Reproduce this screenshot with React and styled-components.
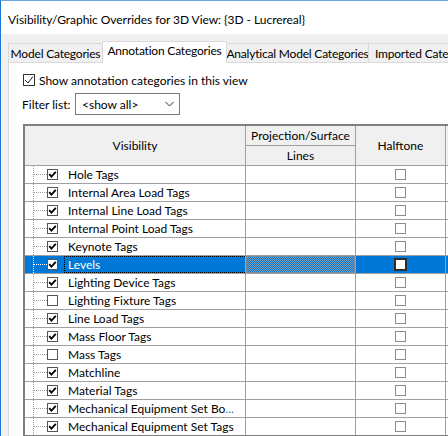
import React from 'react';
import styled, { createGlobalStyle, css } from 'styled-components';

const Global = createGlobalStyle`
  html, body { margin: 0; padding: 0; background: #fff; }
  body { font-family: Lato, "Noto Sans", sans-serif; font-size: 12px; color: #000; }
`;

const Window = styled.div`
  width: 448px;
  height: 436px;
  box-sizing: border-box;
  overflow: hidden;
  border-left: 1px solid #1a7ad4;
  border-top: 1px solid #6aa6e2;
  background: #f0f0f0;
  display: flex;
  flex-direction: column;
`;

const TitleBar = styled.div`
  height: 33px;
  flex: none;
  box-sizing: border-box;
  background: #fff;
  display: flex;
  align-items: center;
  padding: 3px 0 0 7px;
  font-size: 12px;
  letter-spacing: -0.05px;
  white-space: nowrap;
`;

const Body = styled.div`
  flex: 1;
  min-height: 0;
  display: flex;
  flex-direction: column;
  padding: 7px 0 0 7px;
`;

const TabStrip = styled.div`
  display: flex;
  align-items: flex-end;
  height: 21px;
  flex: none;
  padding-left: 1px;
  white-space: nowrap;
`;

const Tab = styled.div`
  box-sizing: border-box;
  flex: none;
  width: ${p => p.$w}px;
  height: 19px;
  border: 1px solid #d9d9d9;
  border-bottom: none;
  margin-left: -1px;
  background: #f0f0f0;
  display: flex;
  align-items: center;
  justify-content: ${p => (p.$left ? 'flex-start' : 'center')};
  padding: 1px 0 0 ${p => (p.$left ? 6 : 0)}px;
  letter-spacing: -0.2px;
  overflow: hidden;
  ${p => p.$active && css`
    height: 22px;
    margin-bottom: -1px;
    background: #fff;
    position: relative;
    z-index: 1;
    padding-top: 0;
    padding-bottom: 4px;
  `}
`;

const Panel = styled.div`
  flex: 1;
  min-height: 0;
  background: #fff;
  border: 1px solid #d9d9d9;
  border-right: none;
  border-bottom: none;
  display: flex;
  flex-direction: column;
  overflow: hidden;
`;

const ShowRow = styled.label`
  display: flex;
  align-items: center;
  gap: 4px;
  height: 12px;
  margin: 11px 0 0 14px;
  white-space: nowrap;
`;

const BigBox = styled.span`
  box-sizing: border-box;
  width: 12px;
  height: 12px;
  border: 1px solid #333;
  background: #fff;
  display: flex;
  align-items: center;
  justify-content: center;
`;

const FilterRow = styled.div`
  display: flex;
  align-items: center;
  height: 22px;
  margin: 7px 0 0 13px;
`;

const FilterLabel = styled.span`
  width: 53px;
  white-space: nowrap;
`;

const Select = styled.div`
  box-sizing: border-box;
  width: 105px;
  height: 22px;
  border: 1px solid #7a7a7a;
  background: #fff;
  display: flex;
  align-items: center;
  justify-content: space-between;
  padding: 0 5px 0 6px;
`;

const Table = styled.div`
  flex: none;
  align-self: flex-start;
  margin: 9px 0 0 14px;
  display: grid;
  grid-template-columns: 220px 109px 89px 200px;
  grid-template-rows: 19px 19px repeat(15, 17px);
  gap: 1px;
  background: #a0a0a0;
  border: 2px solid #808080;
`;

const Head = styled.div`
  background: #f0f0f0;
  display: flex;
  align-items: center;
  justify-content: center;
  white-space: nowrap;
  grid-column: ${p => p.$col};
  grid-row: ${p => p.$row};
`;

const blue = '#0078d7';

const VisCell = styled.div`
  display: flex;
  align-items: stretch;
  padding-left: 8px;
  background: ${p => (p.$sel ? blue : '#fff')};
  color: ${p => (p.$sel ? '#fff' : '#000')};
  white-space: nowrap;
  overflow: hidden;
`;

const Tree = styled.span`
  position: relative;
  width: 14px;
  flex: none;
  box-sizing: border-box;
  border-left: 1px dotted ${p => (p.$sel ? '#fff' : '#a0a0a0')};
  &::after {
    content: '';
    position: absolute;
    left: 0;
    right: 0;
    top: 8px;
    border-top: 1px dotted ${p => (p.$sel ? '#fff' : '#a0a0a0')};
  }
`;

const RowBox = styled.span`
  box-sizing: border-box;
  align-self: center;
  flex: none;
  width: 11px;
  height: 11px;
  border: 1px solid #555;
  background: #fff;
  display: flex;
  align-items: center;
  justify-content: center;
  margin-right: 6px;
`;

const Label = styled.span`
  flex: 1;
  box-sizing: border-box;
  display: flex;
  align-items: center;
  padding-left: 3px;
  border: 1px dotted ${p => (p.$sel ? '#000' : 'transparent')};
  border-right: none;
  overflow: hidden;
`;

const Dots = styled.span`
  color: #1e6fc8;
`;

const LinesCell = styled.div`
  background: #fff;
  ${p => p.$sel && css`
    box-sizing: border-box;
    border: 1px solid #7a8a9a;
    background-color: #4a84ba;
    background-image: repeating-conic-gradient(${blue} 0 25%, #8f9aa6 0 50%);
    background-size: 2px 2px;
  `}
`;

const HalfCell = styled.div`
  background: ${p => (p.$sel ? blue : '#fff')};
  display: flex;
  align-items: center;
  justify-content: center;
`;

const HalfBox = styled.span`
  box-sizing: border-box;
  width: 11px;
  height: 11px;
  border: 1px solid #8c8c8c;
  background: #fff;
  ${p => p.$sel && css`
    width: 13px;
    height: 13px;
    border: 2px solid #2e2e2e;
  `}
`;

const ExtraCell = styled.div`
  background: ${p => (p.$sel ? blue : '#fff')};
`;

const Check = ({ thin }) =>
  thin ? (
    <svg width="10" height="10" viewBox="0 0 10 10">
      <path d="M1 5 L4 8 L9 1.5" fill="none" stroke="#222" strokeWidth="1" />
    </svg>
  ) : (
    <svg width="9" height="9" viewBox="0 0 9 9">
      <path d="M1.2 4.2 L3.4 6.6 L7.8 1.8" fill="none" stroke="#000" strokeWidth="1.8" />
    </svg>
  );

const Chevron = () => (
  <svg width="9" height="6" viewBox="0 0 9 6">
    <path d="M0.5 1 L4.5 5 L8.5 1" fill="none" stroke="#333" strokeWidth="1" />
  </svg>
);

const rows = [
  { name: 'Hole Tags', on: true },
  { name: 'Internal Area Load Tags', on: true },
  { name: 'Internal Line Load Tags', on: true },
  { name: 'Internal Point Load Tags', on: true },
  { name: 'Keynote Tags', on: true },
  { name: 'Levels', on: true, sel: true },
  { name: 'Lighting Device Tags', on: true },
  { name: 'Lighting Fixture Tags', on: false },
  { name: 'Line Load Tags', on: true },
  { name: 'Mass Floor Tags', on: true },
  { name: 'Mass Tags', on: false },
  { name: 'Matchline', on: true },
  { name: 'Material Tags', on: true },
  { name: 'Mechanical Equipment Set Bo', on: true, trunc: true },
  { name: 'Mechanical Equipment Set Tags', on: true },
];

export default function App() {
  return (
    <>
      <Global />
      <Window>
        <TitleBar>Visibility/Graphic Overrides for 3D View: {'{'}3D - Lucrereal{'}'}</TitleBar>
        <Body>
          <TabStrip>
            <Tab $w={95}>Model Categories</Tab>
            <Tab $w={125} $active>Annotation Categories</Tab>
            <Tab $w={143}>Analytical Model Categories</Tab>
            <Tab $w={120} $left>Imported Categories</Tab>
          </TabStrip>
          <Panel>
            <ShowRow>
              <BigBox><Check thin /></BigBox>
              Show annotation categories in this view
            </ShowRow>
            <FilterRow>
              <FilterLabel>Filter list:</FilterLabel>
              <Select>
                <span>&lt;show all&gt;</span>
                <Chevron />
              </Select>
            </FilterRow>
            <Table>
              <Head $col="1" $row="1 / span 2">Visibility</Head>
              <Head $col="2" $row="1">Projection/Surface</Head>
              <Head $col="2" $row="2">Lines</Head>
              <Head $col="3" $row="1 / span 2">Halftone</Head>
              <Head $col="4" $row="1 / span 2" />
              {rows.map(r => (
                <React.Fragment key={r.name}>
                  <VisCell $sel={r.sel}>
                    <Tree $sel={r.sel} />
                    <RowBox>{r.on && <Check />}</RowBox>
                    <Label $sel={r.sel}>
                      {r.name}
                      {r.trunc && <Dots>...</Dots>}
                    </Label>
                  </VisCell>
                  <LinesCell $sel={r.sel} />
                  <HalfCell $sel={r.sel}>
                    <HalfBox $sel={r.sel} />
                  </HalfCell>
                  <ExtraCell $sel={r.sel} />
                </React.Fragment>
              ))}
            </Table>
          </Panel>
        </Body>
      </Window>
    </>
  );
}
